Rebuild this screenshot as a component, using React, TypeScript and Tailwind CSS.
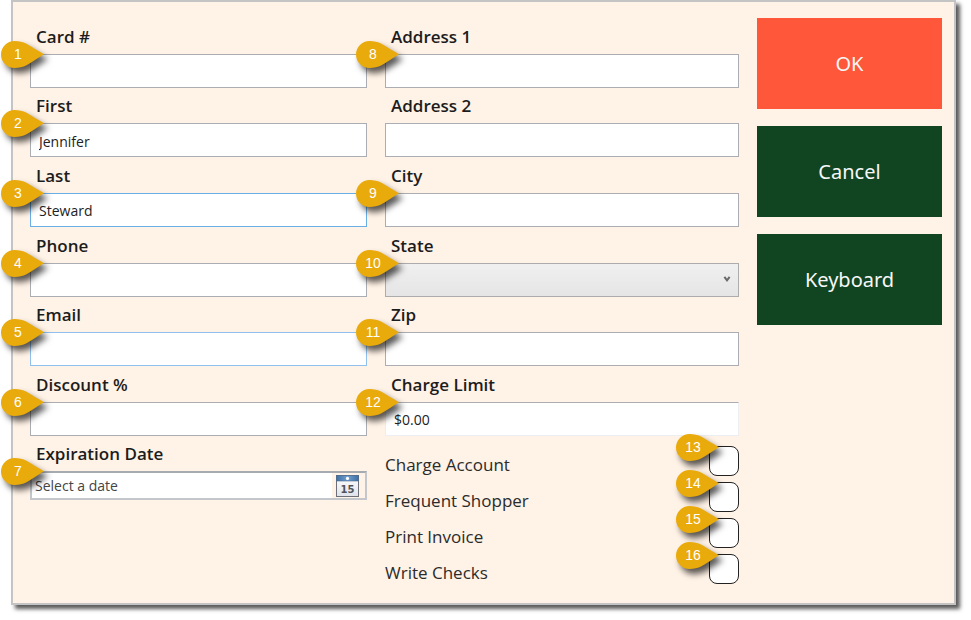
import type { ReactNode } from "react";

const inputBase =
  "block w-full h-[34px] border bg-white pl-2 pr-2 pt-[2px] text-[14px] text-[#222] outline-none rounded-none";

function Marker({ n, className }: { n: number; className: string }) {
  return (
    <span className={`pointer-events-none absolute z-10 block h-[27px] w-[43px] ${className}`}>
      <svg
        viewBox="0 0 43 27"
        className="absolute inset-0 h-full w-full overflow-visible drop-shadow-[4px_5px_3px_rgba(0,0,0,0.65)]"
        aria-hidden="true"
      >
        <path
          d="M13.5 0 C18 0 22 1 25.5 2.8 C31 5.8 37 10 43 13.2 C37 16.8 31 21.2 25.5 24.2 C22 26 18 27 13.5 27 A13.5 13.5 0 0 1 13.5 0 Z"
          fill="#e9aa0b"
        />
      </svg>
      <span className="absolute inset-y-0 left-0 w-[34px] text-center font-['Liberation_Sans',Arial,sans-serif] text-[14px] leading-[27px] text-white">
        {n}
      </span>
    </span>
  );
}

function Field({
  id,
  label,
  marker,
  children,
}: {
  id: string;
  label: string;
  marker?: number;
  children: ReactNode;
}) {
  return (
    <div className="flex flex-col justify-end">
      <label htmlFor={id} className="flex h-[35px] items-center pl-[6px] pt-px text-[17px] font-semibold leading-6 text-[#1c1c1c]">
        {label}
      </label>
      <div className="relative">
        {children}
        {marker !== undefined && <Marker n={marker} className="-left-[29px] -top-[13px]" />}
      </div>
    </div>
  );
}

function TextField({
  id,
  label,
  marker,
  value = "",
  border = "border-[#abadb3]",
}: {
  id: string;
  label: string;
  marker?: number;
  value?: string;
  border?: string;
}) {
  return (
    <Field id={id} label={label} marker={marker}>
      <input id={id} type="text" defaultValue={value} className={`${inputBase} ${border}`} />
    </Field>
  );
}

function CalendarIcon() {
  return (
    <svg width="23" height="22" viewBox="0 0 23 22" aria-hidden="true">
      <defs>
        <linearGradient id="cal-head" x1="0" y1="0" x2="1" y2="0">
          <stop offset="0" stopColor="#3f6ea3" />
          <stop offset="0.5" stopColor="#6f9fd0" />
          <stop offset="1" stopColor="#3f6ea3" />
        </linearGradient>
        <linearGradient id="cal-body" x1="0" y1="0" x2="0" y2="1">
          <stop offset="0" stopColor="#ffffff" />
          <stop offset="1" stopColor="#dfe3ea" />
        </linearGradient>
      </defs>
      <rect x="0.5" y="0.5" width="22" height="21" fill="url(#cal-body)" stroke="#6d7078" />
      <rect x="0.5" y="0.5" width="22" height="5.5" fill="url(#cal-head)" stroke="#4c6a8d" strokeWidth="0.6" />
      <circle cx="11.5" cy="3.4" r="1.6" fill="#fff" />
      <text
        x="11.5"
        y="18"
        textAnchor="middle"
        fontFamily="DejaVu Sans, sans-serif"
        fontSize="10"
        fontWeight="bold"
        fill="#50535a"
      >
        15
      </text>
    </svg>
  );
}

const options = [
  { id: "charge-account", label: "Charge Account", marker: 13 },
  { id: "frequent-shopper", label: "Frequent Shopper", marker: 14 },
  { id: "print-invoice", label: "Print Invoice", marker: 15 },
  { id: "write-checks", label: "Write Checks", marker: 16 },
];

const actions = [
  { label: "OK", color: "bg-[#ff5739]" },
  { label: "Cancel", color: "bg-[#114522]" },
  { label: "Keyboard", color: "bg-[#114522]" },
];

export default function App() {
  return (
    <div className="bg-white pb-[15px] pl-[11px] pr-[15px] font-['Open_Sans','Noto_Sans',sans-serif]">
      <form
        onSubmit={(e) => e.preventDefault()}
        className="grid grid-cols-[337fr_354fr_185px] items-start gap-x-[18px] border-2 border-[#c4c4c4] bg-[#fff2e6] pb-[19px] pl-[17px] pr-3 pt-4 shadow-[4px_4px_4px_rgba(0,0,0,0.65)]"
      >
        <div>
          <div className="grid h-[418px] grid-rows-6">
            <TextField id="card" label="Card #" marker={1} />
            <TextField id="first" label="First" marker={2} value="Jennifer" />
            <TextField id="last" label="Last" marker={3} value="Steward" border="border-[#6aaee8]" />
            <TextField id="phone" label="Phone" marker={4} />
            <TextField id="email" label="Email" marker={5} border="border-[#8fc0ee]" />
            <TextField id="discount" label="Discount %" marker={6} />
          </div>
          <Field id="expiration" label="Expiration Date" marker={7}>
            <div className="flex h-[29px] items-center border-2 border-[#c3c7cc] border-t-[#a5abb0] bg-[#fff2e6]">
              <input
                id="expiration"
                type="text"
                placeholder="Select a date"
                className="h-full min-w-0 flex-1 bg-white pl-[3px] text-[14px] text-[#333] outline-none placeholder:text-[#444]"
              />
              <button type="button" aria-label="Open calendar" className="flex h-full w-[33px] items-center pl-1">
                <CalendarIcon />
              </button>
            </div>
          </Field>
        </div>

        <div>
          <div className="grid h-[418px] grid-rows-6">
            <TextField id="address1" label="Address 1" marker={8} />
            <TextField id="address2" label="Address 2" />
            <TextField id="city" label="City" marker={9} />
            <Field id="state" label="State" marker={10}>
              <select
                id="state"
                className="block h-[34px] w-full appearance-none border border-[#acacac] bg-linear-to-b from-[#f0f0f0] to-[#e5e5e5] px-2 text-[14px] outline-none"
              >
                <option value=""></option>
              </select>
              <svg
                className="pointer-events-none absolute right-2 top-[13px]"
                width="8"
                height="7"
                viewBox="0 0 8 7"
                aria-hidden="true"
              >
                <path d="M1.4 0.8 L4 4.4 L6.6 0.8" fill="none" stroke="#6a6a6a" strokeWidth="2" />
              </svg>
            </Field>
            <TextField id="zip" label="Zip" marker={11} />
            <TextField
              id="limit"
              label="Charge Limit"
              marker={12}
              value="$0.00"
              border="border-[#eceef2] border-t-[#abadb3]"
            />
          </div>
          <div className="mt-[10px] flex flex-col gap-[6px]">
            {options.map((o) => (
              <div key={o.id} className="flex h-[30px] items-center justify-between">
                <label htmlFor={o.id} className="pt-2 text-[17px] leading-6 text-[#2b2b2b]">
                  {o.label}
                </label>
                <div className="relative">
                  <input
                    id={o.id}
                    type="checkbox"
                    className="block h-[30px] w-[30px] appearance-none rounded-[8px] border border-[#222] bg-white"
                  />
                  <Marker n={o.marker} className="-left-[33px] -top-[12px]" />
                </div>
              </div>
            ))}
          </div>
        </div>

        <div className="flex flex-col gap-[17px]">
          {actions.map((a) => (
            <button
              key={a.label}
              type="button"
              className={`h-[91px] w-full pt-px font-['Noto_Sans',sans-serif] text-[20px] text-[#f7f7f7] ${a.color}`}
            >
              {a.label}
            </button>
          ))}
        </div>
      </form>
    </div>
  );
}
